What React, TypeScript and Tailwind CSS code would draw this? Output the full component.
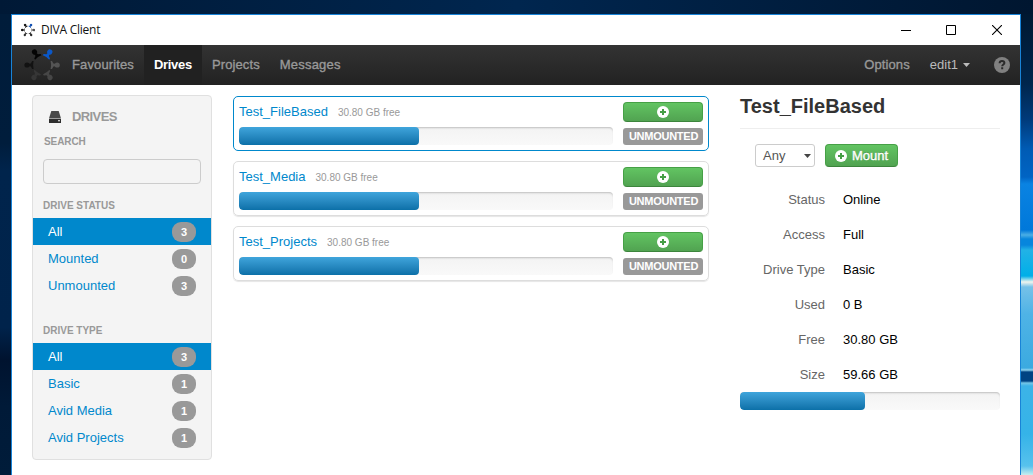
import React from "react";

const drives = [
  { name: "Test_FileBased", free: "30.80 GB free", used: 48, selected: true },
  { name: "Test_Media", free: "30.80 GB free", used: 48, selected: false },
  { name: "Test_Projects", free: "30.80 GB free", used: 48, selected: false },
];

const statusFilters = [
  { label: "All", count: 3, active: true },
  { label: "Mounted", count: 0, active: false },
  { label: "Unmounted", count: 3, active: false },
];

const typeFilters = [
  { label: "All", count: 3, active: true },
  { label: "Basic", count: 1, active: false },
  { label: "Avid Media", count: 1, active: false },
  { label: "Avid Projects", count: 1, active: false },
];

const details = [
  ["Status", "Online"],
  ["Access", "Full"],
  ["Drive Type", "Basic"],
  ["Used", "0 B"],
  ["Free", "30.80 GB"],
  ["Size", "59.66 GB"],
];

// Six people seated around a ring, heads outward.
const figures = [
  { x: 10.5, y: 5, turn: -35, dark: "#040404", light: "#101010" },
  { x: 25.8, y: 5, turn: 35, dark: "#0b58c8", light: "#0c4cb0" },
  { x: 33.2, y: 18, turn: 90, dark: "#545454", light: "#555555" },
  { x: 26, y: 30.5, turn: 145, dark: "#464646", light: "#2c2c2c" },
  { x: 10, y: 30.5, turn: 215, dark: "#363636", light: "#333333" },
  { x: 3, y: 18, turn: 270, dark: "#121212", light: "#141414" },
];

function RingLogo({ size, light }: { size: number; light?: boolean }) {
  return (
    <svg width={size} height={size} viewBox="0 0 36 36" className="shrink-0">
      {figures.map((f, i) => (
        <g key={i} transform={`translate(${f.x} ${f.y}) rotate(${f.turn})`} fill={light ? f.light : f.dark}>
          <circle cx="0" cy="0" r={light ? 3.2 : 2.6} />
          <path d="M-1.2 2H1.2L1.5 3.8L3.9 5.2V6.6Q0 5.6 -3.9 6.6V5.2L-1.5 3.8Z" />
        </g>
      ))}
    </svg>
  );
}

function PlusCircle() {
  return (
    <svg width="12" height="12" viewBox="0 0 12 12">
      <circle cx="6" cy="6" r="6" fill="#fff" />
      <path d="M5 3H7V5H9V7H7V9H5V7H3V5H5Z" fill="#459e45" />
    </svg>
  );
}

function Progress({ value }: { value: number }) {
  return (
    <div className="h-[18px] w-full overflow-hidden rounded bg-linear-to-b from-[#f3f3f3] to-[#f9f9f9] shadow-[inset_0_2px_2px_-1px_rgba(0,0,0,0.22)]">
      <div
        className="h-full rounded bg-linear-to-b from-[#3fa5dc] to-[#0b70a8]"
        style={{ width: `${value}%` }}
      />
    </div>
  );
}

function FilterList({ items }: { items: typeof statusFilters }) {
  return (
    <ul className="font-normal">
      {items.map((item) => (
        <li
          key={item.label}
          className={`flex h-[27px] items-center justify-between px-[15px] ${
            item.active ? "bg-[#0088cc] text-white" : "text-[#0088cc]"
          }`}
        >
          <span className="leading-[27px]">{item.label}</span>
          <span className="mt-px flex h-5 w-6 items-center justify-center rounded-[9px] bg-[#999] text-[11px] font-bold text-white">
            {item.count}
          </span>
        </li>
      ))}
    </ul>
  );
}

function DriveCard({ drive }: { drive: (typeof drives)[number] }) {
  return (
    <div
      className={`flex h-[55px] w-[476px] gap-[10px] rounded-[5px] border pt-[5px] pl-[5px] ${
        drive.selected
          ? "border-[#0088cc]"
          : "border-[#ddd] shadow-[0_1px_1px_rgba(0,0,0,0.1)]"
      }`}
    >
      <div className="w-[374px]">
        <div className="flex h-[25px] items-center gap-[10px] pb-[5px]">
          <span className="text-[13px] text-[#0088cc]">{drive.name}</span>
          <span className="text-[10px] text-[#999]">{drive.free}</span>
        </div>
        <Progress value={drive.used} />
      </div>
      <div className="flex w-20 flex-col gap-[6px]">
        <button className="flex h-5 items-center justify-center rounded border border-[#46a046] border-b-[#3c853c] bg-linear-to-b from-[#62c462] to-[#51a351]">
          <PlusCircle />
        </button>
        <span className="flex h-[17px] items-center justify-center rounded-[3px] bg-[#999] pl-px text-[11px] font-bold tracking-[-0.25px] whitespace-nowrap text-white">
          UNMOUNTED
        </span>
      </div>
    </div>
  );
}

export default function App() {
  return (
    <div className="flex h-[475px] w-[1033px] flex-col overflow-hidden bg-[#001d3f] font-['Liberation_Sans',Arial,sans-serif] text-[13px]">
      <div className="h-[14px] shrink-0 bg-linear-to-r from-[#001936] via-[#00264f] to-[#001630]" />
      <div className="flex h-[461px]">
        <div className="w-[11px] bg-[linear-gradient(#001c3a_0%,#001d3c_28%,#00244c_34%,#00234b_68%,#00132f_75%,#001a38_85%,#001c3a_100%)]" />
        <div className="flex w-[1010px] flex-col border border-b-0 border-[#1883d7] bg-white">
          <header className="flex h-[30px] shrink-0 items-center justify-between pr-[18px] pl-[9px]">
            <div className="flex items-center gap-[6px]">
              <RingLogo size={14} light />
              <span className="font-['Open_Sans',sans-serif] text-[12px] tracking-[-0.25px] text-[#111]">DIVA Client</span>
            </div>
            <div className="-mt-px flex items-center text-black">
              <svg width="10" height="10" viewBox="0 0 10 10"><path d="M0 5.5H10" stroke="currentColor" /></svg>
              <svg width="10" height="10" viewBox="0 0 10 10" className="ml-[35px]"><path d="M.5 .5H9.5V9.5H.5Z" fill="none" stroke="currentColor" /></svg>
              <svg width="10" height="10" viewBox="0 0 10 10" className="ml-9"><path d="M0 0L10 10M10 0L0 10" stroke="currentColor" strokeWidth="1.1" /></svg>
            </div>
          </header>

          <nav className="flex h-10 shrink-0 items-center bg-linear-to-b from-[#333] to-[#222] pl-3 text-[#999]">
            <RingLogo size={36} />
            <span className="ml-3 tracking-[0.12px] [-webkit-text-stroke:0.35px_#999]">Favourites</span>
            <span className="ml-[10px] flex h-10 w-[58px] items-center justify-center bg-[#212121] font-bold tracking-[-0.3px] text-white">Drives</span>
            <span className="ml-[10px] tracking-[0.12px] [-webkit-text-stroke:0.35px_#999]">Projects</span>
            <span className="ml-5 tracking-[0.2px] [-webkit-text-stroke:0.35px_#999]">Messages</span>
            <div className="ml-auto flex items-center pr-[10px]">
              <span className="tracking-[0.1px] [-webkit-text-stroke:0.35px_#999]">Options</span>
              <span className="ml-5 text-[#bbb]">edit1</span>
              <svg width="7" height="4" viewBox="0 0 7 4" className="ml-[5px]"><path d="M0 0H7L3.5 4Z" fill="#bbb" /></svg>
              <svg width="16" height="16" viewBox="0 0 16 16" className="ml-6">
                <circle cx="8" cy="8" r="8" fill="#808080" />
                <path d="M5.6 6.2C5.7 4.5 6.7 3.9 8 3.9C9.4 3.9 10.4 4.7 10.4 5.9C10.4 7.5 8.2 7.4 8.2 9.2M8.2 10.3V12.3" fill="none" stroke="#2a2a2a" strokeWidth="2" />
              </svg>
            </div>
          </nav>

          <main className="flex flex-1 pt-[10px] pl-5">
            <aside className="h-[365px] w-[180px] rounded border border-[#e0e0e0] bg-[#f4f4f4] font-bold text-[#999]">
              <div className="flex h-[39px] items-center pt-[3px] pl-4">
                <svg width="12" height="12" viewBox="0 0 12 12">
                  <path d="M2.3 0H9.7L12 7.5H0Z" fill="#4a4a4a" />
                  <path d="M0 8H12V12H0Z" fill="#2e2e2e" />
                  <path d="M9 9.3H11V10.3H9Z" fill="#fff" />
                </svg>
                <span className="ml-[11px] text-[13px] tracking-[-0.6px]">DRIVES</span>
              </div>
              <label className="block pl-[11px] text-[10px] leading-[14px] tracking-[-0.1px]">SEARCH</label>
              <input className="mt-[10px] ml-[10px] block h-[25px] w-[158px] rounded border border-[#ccc] bg-transparent" />
              <h3 className="h-[34px] pt-[14px] pl-[10px] text-[10px] leading-[15px]">DRIVE STATUS</h3>
              <FilterList items={statusFilters} />
              <h3 className="h-[44px] pt-[24px] pl-[10px] text-[10px] leading-[15px]">DRIVE TYPE</h3>
              <FilterList items={typeFilters} />
            </aside>

            <section className="ml-[21px] flex flex-col gap-[10px] pt-px">
              {drives.map((d) => <DriveCard key={d.name} drive={d} />)}
            </section>

            <section className="ml-[31px] w-[260px]">
              <h1 className="h-[34px] border-b border-[#eee] text-[20px] leading-[22px] font-bold text-[#333]">Test_FileBased</h1>
              <div className="flex gap-[10px] pt-[15px] pl-[15px]">
                <div className="flex h-[23px] w-[60px] items-center justify-between rounded-[3px] border border-[#ccc] pr-[3px] pl-[7px] text-[#555]">
                  <span>Any</span>
                  <svg width="7" height="4" viewBox="0 0 7 4"><path d="M0 0H7L3.5 4Z" fill="#444" /></svg>
                </div>
                <button className="flex h-[23px] w-[73px] items-center gap-[5px] rounded border border-[#46a046] border-b-[#3c853c] bg-linear-to-b from-[#62c462] to-[#51a351] pl-[9px] text-white [-webkit-text-stroke:0.35px_#fff] [text-shadow:0_-1px_0_rgba(0,0,0,0.25)]">
                  <PlusCircle />
                  Mount
                </button>
              </div>
              <dl className="pt-[15px]">
                {details.map(([k, v]) => (
                  <div key={k} className="flex h-[35px] items-center gap-[18px]">
                    <dt className="w-[85px] text-right text-[#666]">{k}</dt>
                    <dd className="text-black">{v}</dd>
                  </div>
                ))}
              </dl>
              <Progress value={48} />
            </section>
          </main>
        </div>
        <div className="w-3 bg-[linear-gradient(#001831_0px,#00264d_70px,#003a7a_105px,#005bb4_135px,#0064c4_163px,#0a83e2_170px,#0078da_216px,#4aaee5_221px,#0786dd_225px,#0786dd_231px,#22b2e6_236px,#00afe8_262px,#f0f5ee_268px,#75c1e8_273px,#4fb3e6_300px,#3baae0_354px,#91d4ee_356px,#004383_358px,#004383_367px,#74c6e7_369px,#3cb3e7_372px,#35b3e8_420px,#57c2ed_452px,#c8eeee_461px)]" />
      </div>
    </div>
  );
}
